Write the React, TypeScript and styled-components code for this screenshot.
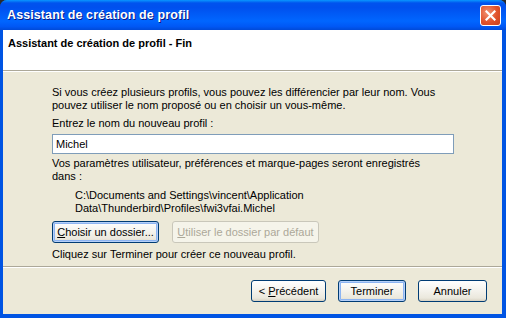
import React from 'react';
import styled, { createGlobalStyle, css } from 'styled-components';

const GlobalStyle = createGlobalStyle`
  html, body {
    margin: 0;
    padding: 0;
    background: #2b2b2b;
  }
  body {
    font-family: 'Liberation Sans', Arial, sans-serif;
    font-size: 11px;
    color: #000;
  }
`;

const Window = styled.div`
  width: 506px;
  height: 318px;
  display: flex;
  flex-direction: column;
  border-radius: 7px 7px 0 0;
  overflow: hidden;
  background: #0054e3;
  box-sizing: border-box;
`;

const TitleBar = styled.div`
  height: 30px;
  flex: none;
  display: flex;
  align-items: center;
  justify-content: space-between;
  padding: 0 5px 0 7px;
  background: linear-gradient(
    to bottom,
    #0997ff 0%,
    #0053ee 10%,
    #0050ee 25%,
    #0066ff 70%,
    #0058f5 88%,
    #004ad8 100%
  );
`;

const Title = styled.span`
  color: #fff;
  font-weight: bold;
  font-size: 12.5px;
  text-shadow: 1px 1px 0 #0a1883;
  letter-spacing: 0.1px;
`;

const CloseButton = styled.button`
  width: 21px;
  height: 21px;
  padding: 0;
  display: flex;
  align-items: center;
  justify-content: center;
  border: 1px solid #fff;
  border-radius: 3px;
  background: radial-gradient(circle at 35% 35%, #f29373 0%, #e0522b 55%, #c8401c 100%);
`;

const Frame = styled.div`
  flex: 1;
  display: flex;
  flex-direction: column;
  margin: 0 4px 4px 3px;
  background: #ece9d8;
`;

const Header = styled.div`
  height: 41px;
  flex: none;
  background: #fff;
  border-bottom: 1px solid #aca899;
  box-shadow: 0 1px 0 #fff;
  padding: 7px 0 0 5px;
  box-sizing: border-box;
  font-weight: bold;
`;

const Content = styled.div`
  flex: 1;
  padding: 15px 48px 0 49px;
  line-height: 13px;
`;

const Para = styled.p<{ $top?: number; $indent?: number }>`
  margin: ${({ $top }) => $top ?? 0}px 0 0 ${({ $indent }) => $indent ?? 0}px;
`;

const TextInput = styled.input`
  display: block;
  width: 100%;
  height: 20px;
  box-sizing: border-box;
  margin-top: 4px;
  padding: 0 3px;
  border: 1px solid #7f9db9;
  background: #fff;
  font: inherit;
  color: #000;
  outline: none;
`;

const ButtonRow = styled.div<{ $top: number }>`
  display: flex;
  gap: 13px;
  margin-top: ${({ $top }) => $top}px;
`;

const XpButton = styled.button<{ $focused?: boolean; $width?: number }>`
  height: 22px;
  width: ${({ $width }) => ($width ? `${$width}px` : 'auto')};
  padding: 0 2px;
  white-space: nowrap;
  font: inherit;
  color: #000;
  border: 1px solid #003c74;
  border-radius: 3px;
  background: linear-gradient(to bottom, #ffffff 0%, #f6f5f0 40%, #ebe8dd 85%, #d8d2c2 100%);
  ${({ $focused }) =>
    $focused &&
    css`
      box-shadow: inset 0 0 0 1px #b6d0f8, inset 0 0 0 2px #8cb4f2;
    `}
  &:disabled {
    color: #aca899;
    border-color: #c9c7ba;
    background: #f5f4ea;
  }
  u {
    text-decoration: underline;
  }
`;

const Footer = styled.div`
  height: 48px;
  flex: none;
  display: flex;
  align-items: flex-start;
  justify-content: flex-end;
  gap: 12px;
  padding: 13px 15px 0 0;
  box-sizing: border-box;
  border-top: 1px solid #aca899;
  box-shadow: inset 0 1px 0 #fff;
`;

const App = () => {
  return (
    <>
      <GlobalStyle />
      <Window>
        <TitleBar>
          <Title>Assistant de création de profil</Title>
          <CloseButton aria-label="Fermer">
            <svg width="11" height="11" viewBox="0 0 11 11">
              <path d="M1.5 1.5 L9.5 9.5 M9.5 1.5 L1.5 9.5" stroke="#fff" strokeWidth="2.2" strokeLinecap="square" />
            </svg>
          </CloseButton>
        </TitleBar>
        <Frame>
          <Header>Assistant de création de profil - Fin</Header>
          <Content>
            <Para>
              Si vous créez plusieurs profils, vous pouvez les différencier par leur nom. Vous
              <br />
              pouvez utiliser le nom proposé ou en choisir un vous-même.
            </Para>
            <Para $top={5}>Entrez le nom du nouveau profil :</Para>
            <TextInput defaultValue="Michel" />
            <Para $top={3}>
              Vos paramètres utilisateur, préférences et marque-pages seront enregistrés
              <br />
              dans :
            </Para>
            <Para $top={6} $indent={23}>
              C:\Documents and Settings\vincent\Application
              <br />
              Data\Thunderbird\Profiles\fwi3vfai.Michel
            </Para>
            <ButtonRow $top={6}>
              <XpButton $focused $width={107}>
                <u>C</u>hoisir un dossier...
              </XpButton>
              <XpButton disabled $width={147}>
                <u>U</u>tiliser le dossier par défaut
              </XpButton>
            </ButtonRow>
            <Para $top={5}>Cliquez sur Terminer pour créer ce nouveau profil.</Para>
          </Content>
          <Footer>
            <XpButton $width={75}>
              &lt; <u>P</u>récédent
            </XpButton>
            <XpButton $focused $width={68}>
              Terminer
            </XpButton>
            <XpButton $width={69}>Annuler</XpButton>
          </Footer>
        </Frame>
      </Window>
    </>
  );
};

export default App;
